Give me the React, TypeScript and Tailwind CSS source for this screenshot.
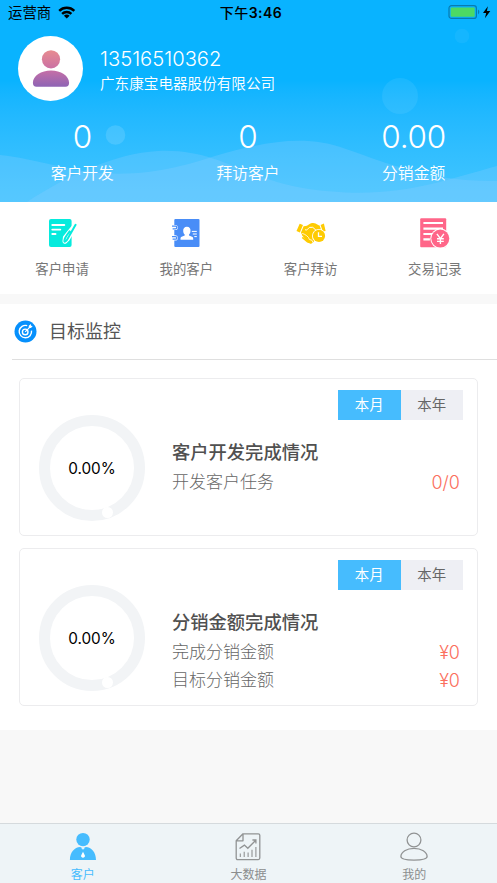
import type { ReactNode } from "react";
import clsx from "clsx";

type Row = { label: string; value: string };

const stats = [
  { value: "0", label: "客户开发" },
  { value: "0", label: "拜访客户" },
  { value: "0.00", label: "分销金额" },
];

const goals: { title: string; percent: string; rows: Row[] }[] = [
  {
    title: "客户开发完成情况",
    percent: "0.00%",
    rows: [{ label: "开发客户任务", value: "0/0" }],
  },
  {
    title: "分销金额完成情况",
    percent: "0.00%",
    rows: [
      { label: "完成分销金额", value: "¥0" },
      { label: "目标分销金额", value: "¥0" },
    ],
  },
];

function ApplyIcon() {
  return (
    <svg width="30" height="32" viewBox="0 0 30 32" fill="none">
      <rect x="2" y="2" width="22.6" height="28" rx="2" fill="#06ebdd" />
      <path d="M5.3 8h12M5.3 12.6h8M5.3 17h3.2" stroke="#fff" strokeWidth="1.9" strokeLinecap="round" />
      <path d="M28.5 8.2 L20.5 21.8 L18 24.2 L18.4 20.6 Z" stroke="#fff" strokeWidth="5" strokeLinejoin="round" />
      <path d="M28.6 7.8 L20.2 22.4 C19.4 23.8 17.6 25.2 17.4 24.4 C17.1 22.4 18.2 20.6 19.8 18.3 L22.6 14.4" stroke="#06ebdd" strokeWidth="2" strokeLinecap="round" strokeLinejoin="round" />
    </svg>
  );
}

function ContactsIcon() {
  return (
    <svg width="30" height="32" viewBox="0 0 30 32" fill="none">
      <rect x="3.3" y="2" width="25.2" height="28" rx="1" fill="#498df7" />
      <g fill="#fff" stroke="#fff" strokeWidth="2.6">
        <rect x="1.7" y="9.2" width="3.8" height="2.6" rx="1.3" />
        <rect x="1.7" y="19.6" width="3.8" height="2.6" rx="1.3" />
      </g>
      <g stroke="#498df7" strokeWidth="1.3">
        <path d="M1 9.2h3.5a1.3 1.3 0 0 1 0 2.6H1.6M1 19.6h3.5a1.3 1.3 0 0 1 0 2.6H1.6" />
      </g>
      <path d="M15.9 9.8c2.5 0 3.8 1.9 3.6 4.2-.1 1.7-.8 2.8-1.5 3.6v1l3 1.2c.9.4 1.2 1 1.2 2v1H9.5v-1c0-1 .3-1.6 1.2-2l3-1.2v-1c-.8-.8-1.4-1.9-1.5-3.6-.1-2.3 1.2-4.2 3.7-4.2z" fill="#fff" />
      <path d="M20.8 14.4h5M21.8 17h4M23.3 19.6h2.5" stroke="#fff" strokeWidth="1" />
    </svg>
  );
}

function VisitIcon() {
  return (
    <svg width="30" height="32" viewBox="0 0 30 32" fill="none">
      <path d="M3.7 6.7 7 8.1 3.9 15.6.5 14.1z" fill="#fecb02" />
      <path d="m24.6 8 3.3-1.4L29.6 14l-2.8.5z" fill="#fecb02" />
      <path d="M7.6 9.2c2.9-.1 4-.8 5.6-2 1.8-1.5 4.8-1.6 6.4-.7 2 1.1 2.6 1.7 4 1.9l2.3 6.5-9.4 11.2c-1.9.7-3.4.2-5-1L5.8 18l-.8-2.4z" fill="#fecb02" />
      <path d="M9 12.4c.9 1.2 2.3.5 3-.6l1.4-1.4 3.4-.1 3.4 3.2" stroke="#fff" strokeWidth="1" strokeLinejoin="round" />
      <path d="m4.5 18.2 2-1.7 2.2.9 2 1.3 1.8 1.8.9 2 2.5.7 1.2 2.6" stroke="#fff" strokeWidth=".8" />
      <path d="m6.3 20.3 5.2 4.4 4 1.4" stroke="#fecb02" strokeWidth="1.6" />
      <circle cx="23" cy="18.9" r="7" fill="#fff" />
      <circle cx="23" cy="18.9" r="6.1" fill="#fecb02" />
      <path d="M22.5 15.3v4.1H26" stroke="#fff" strokeWidth="1.3" />
    </svg>
  );
}

function RecordIcon() {
  return (
    <svg width="30" height="32" viewBox="0 0 30 32" fill="none">
      <rect x=".2" y="1.3" width="26" height="29" rx="1" fill="#ff6689" />
      <path d="M3.4 6h19.6M3.4 11.7h19.6M3.4 17h10.2M3.4 22.3h6.5" stroke="#fff" strokeWidth="2.2" />
      <circle cx="20.3" cy="21.6" r="10" fill="#fff" />
      <circle cx="20.3" cy="21.6" r="9" fill="#ff6689" />
      <path d="m16.9 16.8 3.5 4.8 3.5-4.8M20.4 21.6v5.5M17 21.8h6.8M17 24.4h6.8" stroke="#fff" strokeWidth="1.4" />
    </svg>
  );
}

const menu: { label: string; icon: ReactNode }[] = [
  { label: "客户申请", icon: <ApplyIcon /> },
  { label: "我的客户", icon: <ContactsIcon /> },
  { label: "客户拜访", icon: <VisitIcon /> },
  { label: "交易记录", icon: <RecordIcon /> },
];

function StatusBar() {
  return (
    <div className="flex h-[26px] items-center justify-between pr-[5px] pl-2 text-black">
      <div className="flex flex-1 items-center gap-[7px]">
        <span className="text-[14.4px] leading-5">运营商</span>
        <svg className="-mt-px" width="18" height="13" viewBox="0 0 18 13" fill="none" stroke="#000" strokeWidth="2.5">
          <path d="M1.2 4.8a11 11 0 0 1 15.1 0" />
          <path d="M4.1 7.8a6.8 6.8 0 0 1 9.3 0" />
          <path d="M8.75 12.6 5.9 9.8a4 4 0 0 1 5.7 0z" fill="#000" stroke="none" />
        </svg>
      </div>
      <span className="pl-[2px] text-[14px] leading-5 font-medium tracking-[0.5px]">
        下午<span className="font-semibold">3:46</span>
      </span>
      <div className="flex flex-1 items-center justify-end">
        <svg className="-mt-[2px]" width="44" height="16" viewBox="0 0 44 16" fill="none">
          <rect x="1" y="1.7" width="27.4" height="12.7" rx="2.5" stroke="#087bb0" strokeWidth="1.2" />
          <rect x="2.7" y="3.4" width="24" height="9.3" rx="1" fill="#4cd964" />
          <path d="M30 5.6c1.8.8 1.8 3.9 0 4.8z" fill="#087bb0" />
          <path d="m39.9 2.3-4.9 6.6h3.2l-1.3 5.4 5.4-7.3h-3.4z" fill="#000" />
        </svg>
      </div>
    </div>
  );
}

function HeaderArt() {
  return (
    <svg className="absolute inset-0 h-full w-full" viewBox="0 0 497 202" preserveAspectRatio="none">
      <g fill="#fff">
        <circle cx="462" cy="36" r="7.3" fillOpacity=".05" />
        <circle cx="400" cy="96" r="18" fillOpacity=".07" />
        <circle cx="115.5" cy="135" r="9.8" fillOpacity=".13" />
      </g>
      <g fill="#94cfff" fillOpacity=".25">
        <path d="M0 155C37 159 60 169 100 173C150 177 190 164 215 156C260 143 304 133 346 149C390 164 430 182 497 181V202H0Z" />
        <path d="M27 202C65 177 115 153 158 151C215 148 245 178 303 188C390 202 438 182 497 166V202Z" />
      </g>
    </svg>
  );
}

function Header() {
  return (
    <header className="relative h-[202px] bg-linear-to-b from-[#09b3ff] from-40% to-[#42c6ff] text-white">
      <HeaderArt />
      <div className="relative">
        <StatusBar />
        <div className="flex h-[85px] items-center gap-[17px] pl-[18px]">
          <div className="flex size-[65px] items-center justify-center rounded-full bg-white">
            <svg width="38" height="38" viewBox="0 0 38 38">
              <defs>
                <linearGradient id="avatar" gradientUnits="userSpaceOnUse" x1="0" y1="1" x2="0" y2="37">
                  <stop offset="0" stopColor="#e68a91" />
                  <stop offset=".5" stopColor="#ca70a5" />
                  <stop offset="1" stopColor="#8d64b5" />
                </linearGradient>
              </defs>
              <circle cx="19" cy="9.3" r="9.1" fill="url(#avatar)" />
              <path d="M19 20.5c9.8 0 18.1 5.4 18.1 12.2 0 2.9-1.2 4-3.6 4h-29c-2.4 0-3.6-1.1-3.6-4C.9 25.9 9.2 20.5 19 20.5z" fill="url(#avatar)" />
            </svg>
          </div>
          <div className="pt-[6px]">
            <p className="text-[20.2px] leading-[26px] font-[350]">13516510362</p>
            <p className="text-[14.6px] leading-[25px] font-[350]">广东康宝电器股份有限公司</p>
          </div>
        </div>
        <div className="grid grid-cols-3 pt-[6px] text-center font-[350]">
          {stats.map((s) => (
            <div key={s.label}>
              <p className="pr-px text-[31.5px] leading-10 tracking-[-0.2px]">{s.value}</p>
              <p className="pt-px pr-px text-[15.8px] leading-8">{s.label}</p>
            </div>
          ))}
        </div>
      </div>
    </header>
  );
}

function PeriodSwitch() {
  return (
    <div className="flex h-[30px] w-[125px] text-center text-[14.4px] leading-[30px]">
      <button className="w-1/2 bg-[#46bcfe] text-white">本月</button>
      <button className="w-1/2 bg-[#eeeff4] text-[#666]">本年</button>
    </div>
  );
}

function GoalCard({ title, percent, rows }: { title: string; percent: string; rows: Row[] }) {
  return (
    <article className="flex h-[158px] rounded-[5px] border border-[#ececee] bg-white">
      <div className="relative mt-[36px] ml-[19px] flex size-[106px] shrink-0 items-center justify-center rounded-full border-[11px] border-[#f2f4f6] text-[15.3px] text-black">
        <span className="pt-[2px]">{percent}</span>
        <span className="absolute bottom-[-8px] left-[52px] size-[11px] rounded-full bg-white" />
      </div>
      <div className="flex flex-1 flex-col pr-[14px] pl-[27px]">
        <div className="mt-[11px] flex justify-end">
          <PeriodSwitch />
        </div>
        <div className="pt-[17px] pr-[3px]">
          <h3 className="mb-px text-[18.3px] leading-[30px] font-medium text-[#505050]">{title}</h3>
          {rows.map((r) => (
            <div key={r.label} className="flex h-7 items-center justify-between leading-7">
              <span className="text-[17px] font-light text-[#666]">{r.label}</span>
              <span className="pt-px text-[18px] font-[350] text-[#fb6f5d]">{r.value}</span>
            </div>
          ))}
        </div>
      </div>
    </article>
  );
}

function CustomerTabIcon() {
  return (
    <svg width="28" height="30" viewBox="0 0 28 30" fill="#46bcfe">
      <circle cx="14" cy="7.6" r="6.7" />
      <path d="M.9 28c0-7.3 4.7-12.9 10.2-12.9L14 16.3l2.9-1.2C22.5 15.1 27 20.7 27 28z" />
      <path d="m12.4 15.4 1.6 1 1.6-1-.6 1.9h-2zM14 19.8l1.9 3.7c.3 1.4-.7 2.2-1.9 2.2s-2.2-.8-1.9-2.2z" fill="#fff" />
    </svg>
  );
}

function DataTabIcon() {
  return (
    <svg width="28" height="30" viewBox="0 0 28 30" fill="none" stroke="#919394" strokeWidth="1.3">
      <path d="M9 1.8h15.3c.9 0 1.5.6 1.5 1.5v22.8c0 .9-.6 1.5-1.5 1.5H3.7c-.9 0-1.5-.6-1.5-1.5V8.8zM9 1.8v7H2.2" strokeLinejoin="round" />
      <path d="m5.5 16.5 4.9-3.4 3.4 3.2 8-8.1M18.4 8h3.5v3.5" />
      <path d="M6.3 25v-3.5M10.2 25v-5.2M14.1 25v-4.5M18 25v-7.3M21.9 25V15" strokeWidth="1.1" />
    </svg>
  );
}

function MineTabIcon() {
  return (
    <svg width="28" height="30" viewBox="0 0 28 30" fill="none" stroke="#919394" strokeWidth="1.3">
      <circle cx="14" cy="8" r="6.9" />
      <path d="M14 16.3c7.4 0 13.1 3.7 13.1 8.3 0 2.6-4.9 3.5-13.1 3.5S.9 27.2.9 24.6c0-4.6 5.7-8.3 13.1-8.3z" />
    </svg>
  );
}

const tabs = [
  { label: "客户", icon: <CustomerTabIcon />, active: true },
  { label: "大数据", icon: <DataTabIcon />, active: false },
  { label: "我的", icon: <MineTabIcon />, active: false },
];

export default function App() {
  return (
    <div className="flex h-[883px] w-[497px] flex-col overflow-hidden bg-[#f8f8f8] font-['Inter','Noto_Sans_CJK_SC',sans-serif]">
      <Header />

      <nav className="grid h-[92px] grid-cols-4 bg-white">
        {menu.map((m) => (
          <div key={m.label} className="flex flex-col items-center pt-[15px]">
            {m.icon}
            <span className="mt-[10px] text-[13.4px] leading-5 text-[#777]">{m.label}</span>
          </div>
        ))}
      </nav>

      <section className="mt-[10px] h-[426px] bg-white">
        <div className="ml-3 flex h-[56px] items-center border-b border-[#dfdfdf] pl-[2px]">
          <svg className="-mt-px" width="23" height="23" viewBox="0 0 23 23" fill="none" stroke="#fff">
            <circle cx="11.5" cy="11.5" r="11" fill="#0690fc" stroke="none" />
            <path d="M13.2 5.7a6.2 6.2 0 1 0 4.3 5" strokeWidth="1.4" />
            <circle cx="11.2" cy="11.9" r="2.8" strokeWidth="1.4" />
            <path d="m11.2 11.9 5.2-5.2" strokeWidth="1.2" />
            <path d="m14.7 7.5.1-1.8 2-1.6.2 1.7 1.7.2-1.7 2-1.8.1z" fill="#fff" stroke="none" />
          </svg>
          <h2 className="ml-[12px] text-[18px] leading-7 text-[#555]">目标监控</h2>
        </div>
        <div className="flex flex-col gap-3 pt-[18px] pr-[19px] pl-[19px]">
          {goals.map((g) => (
            <GoalCard key={g.title} {...g} />
          ))}
        </div>
      </section>

      <footer className="mt-auto grid h-[60px] grid-cols-3 border-t border-[#d5dadd] bg-[#eef4f7]">
        {tabs.map((t) => (
          <div key={t.label} className="flex flex-col items-center pt-2">
            {t.icon}
            <span className={clsx("mt-1 text-[12px] leading-[18px]", t.active ? "text-[#46bcfe]" : "text-[#8b8d8e]")}>
              {t.label}
            </span>
          </div>
        ))}
      </footer>
    </div>
  );
}
